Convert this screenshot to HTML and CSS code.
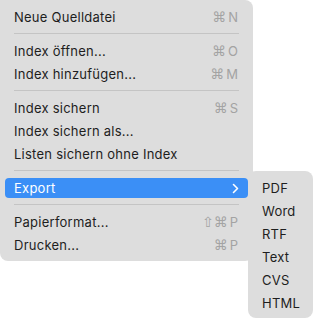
FILE: index.html
```html
<!DOCTYPE html>
<html lang="de">
<head>
    <meta charset="UTF-8">
    <meta name="viewport" content="width=device-width, initial-scale=1.0">
    <title>Ablage</title>
    <link rel="stylesheet" href="styles.css">
</head>
<body>

    <!-- Main menu -->
    <div class="menu">
        <div class="item"><span class="label">Neue Quelldatei</span><span class="key"><span class="mod">⌘</span>N</span></div>
        <div class="sep"></div>
        <div class="item"><span class="label">Index öffnen...</span><span class="key"><span class="mod">⌘</span>O</span></div>
        <div class="item"><span class="label">Index hinzufügen...</span><span class="key"><span class="mod">⌘</span>M</span></div>
        <div class="sep"></div>
        <div class="item"><span class="label">Index sichern</span><span class="key"><span class="mod">⌘</span>S</span></div>
        <div class="item"><span class="label">Index sichern als...</span></div>
        <div class="item"><span class="label">Listen sichern ohne Index</span></div>
        <div class="sep"></div>
        <div class="item item-active">
            <span class="label">Export</span>
            <svg class="chevron" width="7" height="11" viewBox="0 0 7 11">
                <path d="M1.5 1.5 L5.5 5.5 L1.5 9.5" fill="none" stroke="#fff" stroke-width="1.6" stroke-linecap="round" stroke-linejoin="round"/>
            </svg>
        </div>
        <div class="sep"></div>
        <div class="item"><span class="label">Papierformat...</span><span class="key"><span class="mod">⇧⌘</span>P</span></div>
        <div class="item"><span class="label">Drucken...</span><span class="key"><span class="mod">⌘</span>P</span></div>
    </div>

    <!-- Export submenu -->
    <div class="submenu">
        <div class="item"><span class="label">PDF</span></div>
        <div class="item"><span class="label">Word</span></div>
        <div class="item"><span class="label">RTF</span></div>
        <div class="item"><span class="label">Text</span></div>
        <div class="item"><span class="label">CVS</span></div>
        <div class="item"><span class="label">HTML</span></div>
    </div>

</body>
</html>
```

FILE: styles.css
```css
/* Reset */
*, *::before, *::after {
    box-sizing: border-box;
    margin: 0;
    padding: 0;
}

body {
    font-family: Inter, 'DejaVu Sans', sans-serif;
    font-size: 13px;
    letter-spacing: 0.25px;
    color: #1e1e1e;
    background-color: #ffffff;
    position: relative;
    min-height: 100vh;
}

/* Menus */
.menu,
.submenu {
    display: flex;
    flex-direction: column;
    gap: 3px;
    background-color: #dddddd;
}

.menu {
    width: 253px;
    padding: 7px 0 6px;
    border-radius: 0 8px 8px 8px;
}

.submenu {
    position: absolute;
    left: 248px;
    top: 171px;
    width: 65px;
    height: 147px;
    padding: 7px 0 5px;
    border-radius: 8px;
}

/* Rows */
.item {
    height: 20px;
    margin: 0 5px;
    padding: 0 10px 0 9px;
    display: flex;
    align-items: center;
    justify-content: space-between;
    border-radius: 4px;
    white-space: nowrap;
}

.item-active {
    background-color: #3b8ff6;
    color: #ffffff;
}

.chevron {
    margin-right: -1px;
}

.key {
    color: #a3a3a3;
    display: flex;
    align-items: center;
    gap: 2px;
    letter-spacing: 0;
}

.mod {
    font-family: 'DejaVu Sans', sans-serif;
    font-size: 14px;
    line-height: 1;
}

.sep {
    height: 1px;
    margin: 3px 14px 4px;
    background-color: #c4c4c4;
}
```
